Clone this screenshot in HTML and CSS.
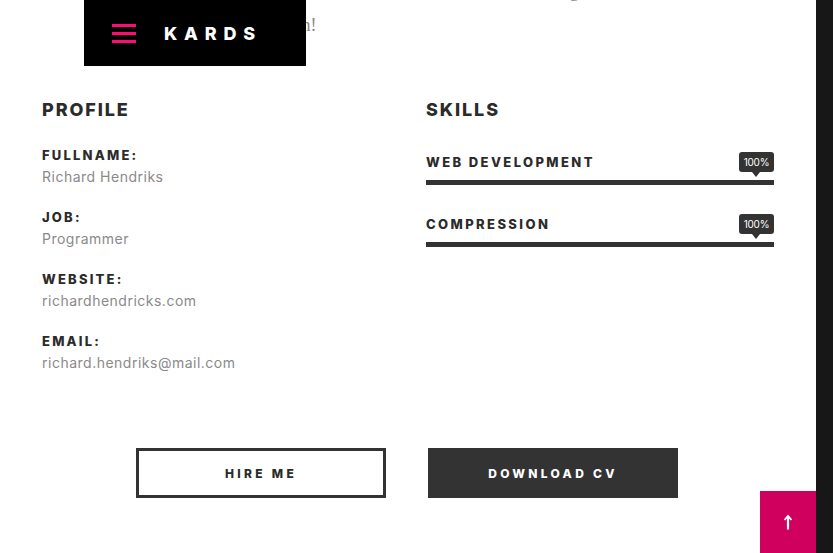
FILE: index.html
```html
<!DOCTYPE html>
<html lang="en">
<head>
<meta charset="utf-8">
<title>Kards - Resume</title>
<link rel="stylesheet" href="styles.css">
</head>
<body>
<div class="frame">
  <main class="page">
    <p class="intro">Hello I am Richard a creator of clean and modern coding<br>done with a passion!</p>

    <section class="cols">
      <div class="col">
        <h2 class="title">Profile</h2>
        <div class="info">
          <div class="info-item">
            <div class="label">Fullname:</div>
            <div class="value">Richard Hendriks</div>
          </div>
          <div class="info-item">
            <div class="label">Job:</div>
            <div class="value">Programmer</div>
          </div>
          <div class="info-item">
            <div class="label">Website:</div>
            <div class="value">richardhendricks.com</div>
          </div>
          <div class="info-item">
            <div class="label">Email:</div>
            <div class="value">richard.hendriks@mail.com</div>
          </div>
        </div>
      </div>

      <div class="col">
        <h2 class="title">Skills</h2>
        <div class="skills">
          <div class="skill">
            <div class="skill-name">Web Development</div>
            <div class="bar"><span class="fill" style="width:100%"></span><span class="tip">100%</span></div>
          </div>
          <div class="skill">
            <div class="skill-name">Compression</div>
            <div class="bar"><span class="fill" style="width:100%"></span><span class="tip">100%</span></div>
          </div>
        </div>
      </div>
    </section>

    <div class="actions">
      <a class="btn btn-outline" href="#">Hire me</a>
      <a class="btn btn-solid" href="#">Download CV</a>
    </div>
  </main>
  <aside class="edge"></aside>
</div>

<header class="topbar">
  <span class="burger"><i></i><i></i><i></i></span>
  <span class="logo">KARDS</span>
</header>

<a class="totop" href="#">
  <svg width="10" height="16" viewBox="0 0 10 16"><path d="M5 2.5 V15.5" stroke="#fff" stroke-width="2.2" fill="none"/><path d="M1.5 6 L5 1.8 L8.5 6" stroke="#fff" stroke-width="1.8" fill="none"/></svg>
</a>
</body>
</html>
```

FILE: styles.css
```css
* { box-sizing: border-box; }

html, body {
  margin: 0;
  padding: 0;
  height: 100%;
  overflow: hidden;
  background: #fff;
}

body {
  font-family: Inter, "Open Sans", Arial, sans-serif;
  color: #2b2b2b;
}

.frame {
  display: flex;
  height: 553px;
}

.page {
  width: 816px;
  padding: 0 42px;
  overflow: hidden;
}

.edge {
  flex: 0 0 17px;
  background: #171717;
}

.intro {
  margin: -26px 0 0;
  padding-left: 126px;
  font-family: "Liberation Serif", "Times New Roman", serif;
  font-size: 18px;
  line-height: 34px;
  color: #858585;
  white-space: nowrap;
}

.cols {
  margin-top: 56px;
  display: grid;
  grid-template-columns: 348px 348px;
  column-gap: 36px;
}

.title {
  margin: 0;
  font-size: 18px;
  line-height: 24px;
  font-weight: 800;
  letter-spacing: 1.9px;
  text-transform: uppercase;
  color: #2b2b2b;
}

.info {
  margin-top: 24px;
  display: flex;
  flex-direction: column;
  gap: 21px;
}

.label {
  font-size: 13px;
  line-height: 18px;
  font-weight: 800;
  letter-spacing: 2.2px;
  text-transform: uppercase;
  color: #2b2b2b;
  margin-bottom: 3px;
}

.value {
  font-size: 14px;
  line-height: 20px;
  letter-spacing: 0.5px;
  color: #8a8a8a;
}

.skills {
  margin-top: 31px;
  display: flex;
  flex-direction: column;
  gap: 30px;
}

.skill-name {
  font-size: 13px;
  line-height: 18px;
  font-weight: 800;
  letter-spacing: 2.4px;
  text-transform: uppercase;
  color: #2b2b2b;
  padding-bottom: 9px;
}

.bar {
  position: relative;
  height: 5px;
  background: #e6e6e6;
}

.fill {
  display: block;
  height: 100%;
  background: #333;
}

.tip {
  position: absolute;
  right: 0;
  bottom: 13px;
  width: 35px;
  height: 20px;
  background: #333;
  border-radius: 3px;
  color: #fff;
  font-size: 10px;
  line-height: 20px;
  text-align: center;
  letter-spacing: -0.3px;
}

.tip::after {
  content: "";
  position: absolute;
  left: 13px;
  top: 20px;
  border-left: 4px solid transparent;
  border-right: 4px solid transparent;
  border-top: 5px solid #333;
}

.actions {
  margin-top: 75px;
  display: flex;
  justify-content: center;
  gap: 42px;
  padding-right: 2px;
}

.btn {
  width: 250px;
  height: 50px;
  display: flex;
  align-items: center;
  justify-content: center;
  font-size: 12px;
  font-weight: 800;
  letter-spacing: 3.3px;
  text-transform: uppercase;
  text-decoration: none;
}

.btn-outline {
  border: 3px solid #333;
  color: #2b2b2b;
  background: #fff;
}

.btn-solid {
  background: #333;
  color: #fff;
}

.topbar {
  position: absolute;
  left: 84px;
  top: 0;
  width: 222px;
  height: 66px;
  background: #000;
  display: flex;
  align-items: center;
  padding-left: 28px;
  gap: 28px;
}

.burger {
  display: flex;
  flex-direction: column;
  gap: 5px;
  width: 24px;
}

.burger i {
  display: block;
  height: 3px;
  background: #ff0d74;
}

.logo {
  color: #fff;
  font-size: 18px;
  font-weight: 800;
  letter-spacing: 6.8px;
}

.totop {
  position: absolute;
  right: 17px;
  bottom: 0;
  width: 56px;
  height: 62px;
  background: #cf005e;
  display: flex;
  align-items: center;
  justify-content: center;
}
```
